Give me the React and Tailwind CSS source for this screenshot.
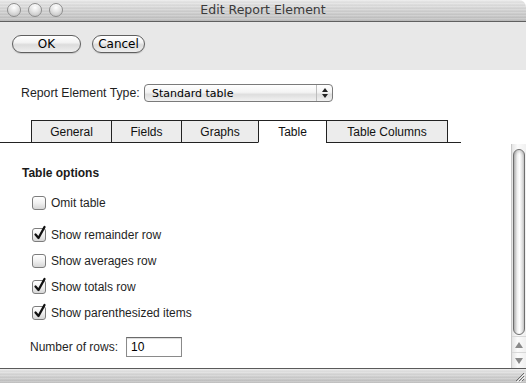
import React from "react";

const metal =
  "bg-[repeating-linear-gradient(180deg,rgba(255,255,255,0.18)_0px,rgba(255,255,255,0.18)_1px,rgba(0,0,0,0.04)_2px,rgba(0,0,0,0)_3px),linear-gradient(180deg,#e9e9e9_0%,#d2d2d2_45%,#bdbdbd_100%)]";

function Light() {
  return (
    <div className="w-[14px] h-[14px] rounded-full border border-[#8c8c8c] bg-[radial-gradient(circle_at_50%_30%,#ffffff_0%,#e2e2e2_45%,#b8b8b8_100%)] shadow-[inset_0_1px_1px_rgba(255,255,255,0.8)]" />
  );
}

function AquaButton({ children, w }) {
  return (
    <div
      className={`${w} h-[18px] rounded-full border border-[#5f5f5f] bg-[linear-gradient(180deg,#ffffff_0%,#f3f3f3_40%,#dcdcdc_55%,#eeeeee_100%)] flex items-center justify-center text-[12px] text-black leading-none shadow-[0_1px_1px_rgba(0,0,0,0.15)]`}
      style={{ fontFamily: '"DejaVu Sans", sans-serif' }}
    >
      {children}
    </div>
  );
}

function Checkbox({ checked }) {
  return (
    <div className="relative w-[14px] h-[14px] shrink-0">
      <div className="absolute inset-0 rounded-[3px] border border-[#7d7d7d] bg-[linear-gradient(180deg,#ffffff_0%,#f0f0f0_50%,#d6d6d6_100%)]" />
      {checked && (
        <svg
          className="absolute left-[1px] top-[-3px]"
          width="14"
          height="16"
          viewBox="0 0 14 16"
        >
          <path
            d="M2.5 9.5 L5.5 13 L11.5 2"
            fill="none"
            stroke="#111"
            strokeWidth="2.3"
            strokeLinecap="round"
            strokeLinejoin="round"
          />
        </svg>
      )}
    </div>
  );
}

function CheckRow({ checked, label, mt }) {
  return (
    <div className={`${mt} h-[16px] flex items-center pl-[32px] gap-[5px]`}>
      <Checkbox checked={checked} />
      <span className="text-[12px] text-[#1f1f1f]">{label}</span>
    </div>
  );
}

function Tab({ label, w, active, last }) {
  return (
    <div
      className={`${w} h-[23px] flex items-center justify-center text-[12px] text-[#111] border-t border-l border-[#222] ${
        last ? "border-r" : ""
      } ${active ? "bg-white border-b border-b-white" : "bg-[#ececec] border-b"}`}
    >
      {label}
    </div>
  );
}

export default function App() {
  return (
    <div
      className="w-[526px] h-[383px] flex flex-col overflow-hidden bg-white"
      style={{ fontFamily: '"Liberation Sans", Arial, sans-serif' }}
    >
      {/* Title bar */}
      <div
        className={`h-[22px] shrink-0 relative flex items-center justify-center border-b border-[#606060] rounded-tr-[7px] ${metal}`}
      >
        <div className="absolute left-[7px] top-[3px] flex gap-[7px]">
          <Light />
          <Light />
          <Light />
        </div>
        <span
          className="text-[12.5px] text-[#3a3a3a] leading-none"
          style={{ fontFamily: '"DejaVu Sans", sans-serif' }}
        >
          Edit Report Element
        </span>
      </div>

      {/* Toolbar */}
      <div className="h-[48px] shrink-0 bg-[#e8e8e8] flex items-start pt-[13px] pl-[12px] gap-[11px]">
        <AquaButton w="w-[69px]">OK</AquaButton>
        <AquaButton w="w-[53px]">Cancel</AquaButton>
      </div>

      {/* Upper white area */}
      <div className="shrink-0">
        <div className="mt-[14px] h-[18px] flex items-center pl-[21px]">
          <span className="text-[12.3px] text-[#1f1f1f] w-[123px]">Report Element Type:</span>
          <div
            className="w-[189px] h-[18px] rounded-[4px] border border-[#7a7a7a] bg-[linear-gradient(180deg,#ffffff_0%,#f4f4f4_45%,#dedede_60%,#f2f2f2_100%)] flex items-center"
            style={{ fontFamily: '"DejaVu Sans", sans-serif' }}
          >
            <span className="flex-1 pl-[7px] text-[11px] text-black leading-none">Standard table</span>
            <div className="w-[16px] h-full border-l border-[#bdbdbd] flex flex-col items-center justify-center gap-[2px]">
              <svg width="6" height="4" viewBox="0 0 6 4">
                <path d="M3 0 L6 4 L0 4 Z" fill="#222" />
              </svg>
              <svg width="6" height="4" viewBox="0 0 6 4">
                <path d="M0 0 L6 0 L3 4 Z" fill="#222" />
              </svg>
            </div>
          </div>
        </div>

        <div className="mt-[18px] flex items-end">
          <div className="w-[31px] h-[23px] border-b border-[#222]" />
          <Tab label="General" w="w-[80px]" />
          <Tab label="Fields" w="w-[70px]" />
          <Tab label="Graphs" w="w-[77px]" />
          <Tab label="Table" w="w-[68px]" active />
          <Tab label="Table Columns" w="w-[122px]" last />
          <div className="w-[13px] h-[23px] border-b border-[#222]" />
        </div>
      </div>

      {/* Lower area */}
      <div className="flex-1 flex min-h-0">
        <div className="flex-1 flex flex-col">
          <div className="mt-[23px] h-[14px] flex items-center pl-[22px] text-[12px] font-bold text-[#1a1a1a]">
            Table options
          </div>
          <CheckRow mt="mt-[15px]" label="Omit table" />
          <CheckRow mt="mt-[16px]" checked label="Show remainder row" />
          <CheckRow mt="mt-[10px]" label="Show averages row" />
          <CheckRow mt="mt-[10px]" checked label="Show totals row" />
          <CheckRow mt="mt-[10px]" checked label="Show parenthesized items" />
          <div className="mt-[16px] h-[20px] flex items-center pl-[30px]">
            <span className="text-[12px] text-[#1f1f1f] w-[96px]">Number of rows:</span>
            <div className="w-[56px] h-[20px] border border-[#8a8a8a] border-t-[#6a6a6a] bg-white flex items-center pl-[4px] text-[12px] text-black shadow-[inset_0_1px_1px_rgba(0,0,0,0.15)]">
              10
            </div>
          </div>
        </div>

        {/* Scrollbar */}
        <div className="w-[15px] mt-[1px] flex flex-col border-l border-[#c9c9c9] bg-[linear-gradient(90deg,#e4e4e4_0%,#fbfbfb_40%,#f0f0f0_100%)]">
          <div className="flex-1 px-[1px] pt-[5px] pb-[1px]">
            <div className="w-full h-[186px] rounded-full border border-[#6e6e6e] bg-[linear-gradient(90deg,#b9b9b9_0%,#f2f2f2_35%,#ffffff_55%,#d0d0d0_100%)] shadow-[inset_0_2px_3px_rgba(0,0,0,0.15)]" />
          </div>
          <div className="h-[16px] flex items-center justify-center border-t border-[#d8d8d8]">
            <svg width="8" height="6" viewBox="0 0 8 6">
              <path d="M4 0 L8 6 L0 6 Z" fill="#8a8a8a" />
            </svg>
          </div>
          <div className="h-[16px] flex items-center justify-center border-t border-[#d8d8d8]">
            <svg width="8" height="6" viewBox="0 0 8 6">
              <path d="M0 0 L8 0 L4 6 Z" fill="#8a8a8a" />
            </svg>
          </div>
        </div>
      </div>

      {/* Bottom bar */}
      <div className={`h-[15px] shrink-0 relative border-t border-[#5a5a5a] ${metal}`}>
        <svg className="absolute right-[1px] bottom-[1px]" width="11" height="11" viewBox="0 0 11 11">
          <path d="M10 2 L2 10 M10 5 L5 10 M10 8 L8 10" stroke="#6a6a6a" strokeWidth="1" />
          <path d="M11 3 L3 11 M11 6 L6 11" stroke="#ffffff" strokeWidth="0.8" />
        </svg>
      </div>
    </div>
  );
}
